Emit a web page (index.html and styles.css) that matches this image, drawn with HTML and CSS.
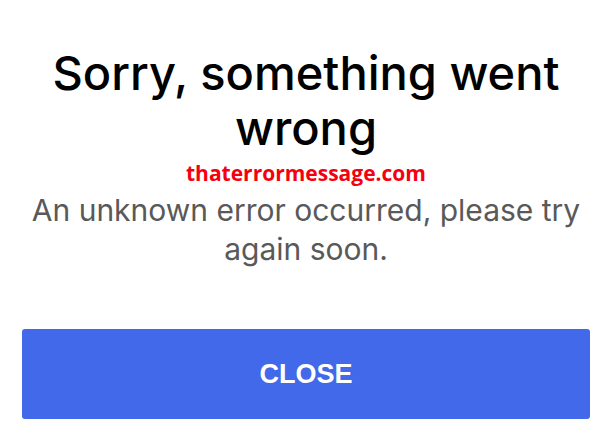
FILE: index.html
```html
<!DOCTYPE html>
<html lang="en">
<head>
    <meta charset="UTF-8">
    <meta name="viewport" content="width=device-width, initial-scale=1.0">
    <title>Error</title>
    <link rel="stylesheet" href="styles.css">
</head>
<body>
    <div class="dialog">
        <h1 class="title">Sorry, something went wrong</h1>
        <p class="watermark">thaterrormessage.com</p>
        <p class="message">An unknown error occurred, please try again soon.</p>
        <button class="close-btn">CLOSE</button>
    </div>
</body>
</html>
```
FILE: styles.css
```css
body {
    font-family: Inter, sans-serif;
    background: #fff;
    margin: 0;
    padding: 0;
}

.dialog {
    display: flex;
    flex-direction: column;
    align-items: center;
    padding: 45px 17px 0 22px;
    text-align: center;
}

.title {
    font-size: 47px;
    font-weight: 500;
    line-height: 55px;
    color: #000;
    margin: 0;
    width: 560px;
}

.watermark {
    font-family: 'Open Sans', sans-serif;
    font-weight: 700;
    font-size: 21px;
    line-height: 28px;
    color: #f5000f;
    margin: 4px 0 0;
}

.message {
    font-size: 30px;
    line-height: 39px;
    color: #595959;
    margin: 4px 0 0;
    width: 568px;
}

.close-btn {
    align-self: stretch;
    height: 90px;
    margin-top: 60px;
    border: none;
    border-radius: 3px;
    background: #4169e9;
    color: #fff;
    font-family: 'Liberation Sans', Arial, sans-serif;
    font-weight: 700;
    font-size: 27px;
    cursor: pointer;
}
```
